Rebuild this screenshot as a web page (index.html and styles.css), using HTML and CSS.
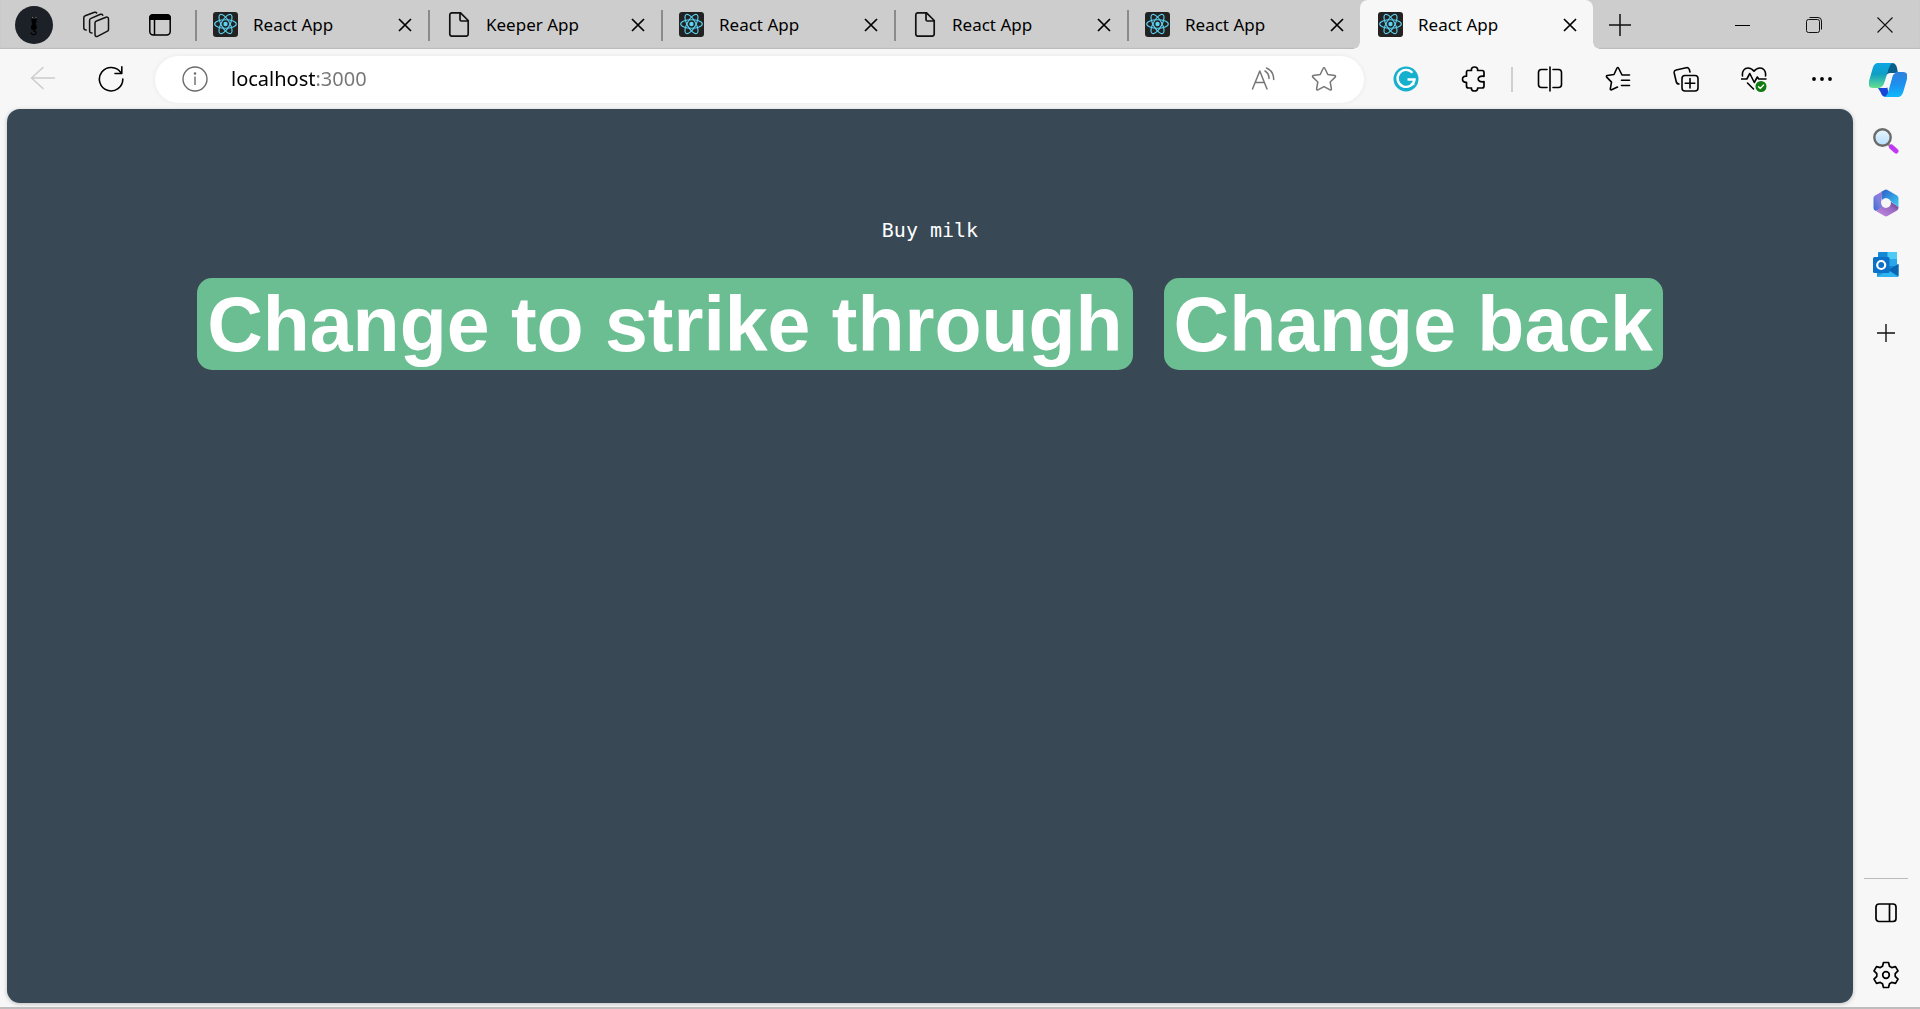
FILE: index.html
```html
<!DOCTYPE html>
<html lang="en">
<head>
<meta charset="utf-8">
<meta name="viewport" content="width=device-width, initial-scale=1">
<title>React App</title>
<link rel="stylesheet" href="styles.css">
</head>
<body>
<svg class="defs" aria-hidden="true">
  <symbol id="react" viewBox="0 0 25 25">
    <rect width="25" height="25" rx="3" fill="#222"/>
    <g fill="none" stroke="#5bd3f3" stroke-width="1.1">
      <ellipse cx="12.5" cy="12" rx="10.8" ry="4.2"/>
      <ellipse cx="12.5" cy="12" rx="10.8" ry="4.2" transform="rotate(60 12.5 12)"/>
      <ellipse cx="12.5" cy="12" rx="10.8" ry="4.2" transform="rotate(120 12.5 12)"/>
    </g>
    <circle cx="12.5" cy="12" r="2.2" fill="#5bd3f3"/>
  </symbol>
  <symbol id="file" viewBox="0 0 25 25">
    <path d="M6 .8h8.500l7.700 7.700V22a2.200 2.200 0 0 1-2.200 2.200H6A2.200 2.200 0 0 1 3.800 22V3A2.200 2.200 0 0 1 6 .8zM14 1v6.500a1.500 1.500 0 0 0 1.500 1.500H22" fill="none" stroke="#111" stroke-width="1.700"/>
  </symbol>
  <symbol id="close" viewBox="0 0 14 14">
    <path d="M1 1l12 12M13 1L1 13" fill="none" stroke="#000" stroke-width="1.700"/>
  </symbol>
</svg>

<header class="tabstrip">
  <button class="profile" aria-label="Profile">
    <svg width="38" height="38" viewBox="0 0 38 38"><circle cx="19" cy="19" r="19" fill="#1c2127"/><path d="M16.500 11l1 2h3l1-2v5l-1 2c2.500 3 1 6-1 6.500h-1c-3-1-3.500-4-1-6.500l-1-2z" fill="#000"/><path d="M18 25c3 0 4 1.500 2.500 3-2 1.400-4.500.4-4.500-1.500" fill="none" stroke="#000" stroke-width="1.200"/><path d="M17 11.500h1M20.500 11.500h1" stroke="#777" stroke-width="1"/></svg>
  </button>
  <button class="strip-button" aria-label="Workspaces">
    <svg width="28" height="28" viewBox="0 0 28 28" fill="none" stroke="#111" stroke-width="1.500" stroke-linejoin="round" stroke-linecap="round"><path d="M14.500 10l9.500-3.800c1.300-.5 2.500.3 2.500 1.700v10.500c0 1-.6 1.700-1.500 2l-9.500 5c-1.200.5-2.500-.3-2.500-1.600v-11.800c0-.9.600-1.700 1.500-2z"/><path d="M10 22c-1.500 0-2.400-.7-2.400-2V9.400c0-1 .5-1.700 1.400-2l9.500-4.100c1-.3 1.900 0 2.300.9"/><path d="M4.200 19c-1.500-.1-2.400-.7-2.400-2V6.800c0-1 .5-1.700 1.400-2L12.500 1.300c.9-.3 1.700 0 2.200.7"/></svg>
  </button>
  <button class="strip-button" aria-label="Tab actions menu">
    <svg width="24" height="24" viewBox="0 0 24 24"><rect x="1.800" y="2" width="20.400" height="20" rx="3.500" fill="none" stroke="#000" stroke-width="1.500"/><path d="M1 7V5a4 4 0 0 1 4-4h14a4 4 0 0 1 4 4v2z"/><path d="M6.500 7v15" stroke="#000" stroke-width="1.500"/></svg>
  </button>
  <nav class="tabs" aria-label="Tabs">
    <div class="tab"><svg class="favicon"><use href="#react"/></svg><a class="tab-title" href="#">React App</a><button class="tab-close" aria-label="Close tab"><svg><use href="#close"/></svg></button></div>
    <div class="tab"><svg class="favicon"><use href="#file"/></svg><a class="tab-title" href="#">Keeper App</a><button class="tab-close" aria-label="Close tab"><svg><use href="#close"/></svg></button></div>
    <div class="tab"><svg class="favicon"><use href="#react"/></svg><a class="tab-title" href="#">React App</a><button class="tab-close" aria-label="Close tab"><svg><use href="#close"/></svg></button></div>
    <div class="tab"><svg class="favicon"><use href="#file"/></svg><a class="tab-title" href="#">React App</a><button class="tab-close" aria-label="Close tab"><svg><use href="#close"/></svg></button></div>
    <div class="tab"><svg class="favicon"><use href="#react"/></svg><a class="tab-title" href="#">React App</a><button class="tab-close" aria-label="Close tab"><svg><use href="#close"/></svg></button></div>
    <div class="tab tab-active"><svg class="favicon"><use href="#react"/></svg><a class="tab-title" href="#" aria-current="page">React App</a><button class="tab-close" aria-label="Close tab"><svg><use href="#close"/></svg></button></div>
  </nav>
  <button class="new-tab" aria-label="New tab">
    <svg width="22" height="22" viewBox="0 0 22 22" stroke="#111" stroke-width="1.500"><path d="M11 0v22M0 11h22"/></svg>
  </button>
  <div class="window-controls">
    <button aria-label="Minimize"><svg width="16" height="16" viewBox="0 0 16 16"><path d="M0 8.500h15" stroke="#000"/></svg></button>
    <button aria-label="Restore"><svg width="16" height="16" viewBox="0 0 16 16" fill="none" stroke="#111"><rect x=".5" y="2.500" width="13" height="13" rx="2"/><path d="M3.500.5H12A3.500 3.500 0 0 1 15.500 4v8.500"/></svg></button>
    <button aria-label="Close window"><svg width="16" height="16" viewBox="0 0 16 16"><path d="M.5.500l15 15M15.500.500l-15 15" stroke="#111" stroke-width="1.100"/></svg></button>
  </div>
</header>

<div class="toolbar">
  <button class="tool" aria-label="Back" disabled>
    <svg width="26" height="26" viewBox="0 0 26 26" fill="none" stroke="#ccc" stroke-width="1.500" stroke-linecap="round" stroke-linejoin="round"><path d="M24.500 12H1.500M13 1.500L1.500 12 13 22.500"/></svg>
  </button>
  <button class="tool" aria-label="Refresh">
    <svg width="26" height="26" viewBox="0 0 26 26" fill="none" stroke="#000" stroke-width="1.600" stroke-linecap="round" stroke-linejoin="round"><path d="M24.800 13A11.700 11.700 0 1 1 22.900 6.800"/><path d="M23.800.800v6.700h-6.800"/></svg>
  </button>
  <form class="address">
    <button type="button" class="site-info" aria-label="View site information">
      <svg width="26" height="26" viewBox="0 0 26 26" fill="none" stroke="#6b6b6b" stroke-width="1.400"><circle cx="13" cy="13" r="12"/><path d="M13 10.500v8.500"/><circle cx="13" cy="7.500" r=".6" fill="#6b6b6b"/></svg>
    </button>
    <input class="url" type="text" aria-label="Address" value="localhost:3000">
    <button type="button" class="address-tool" aria-label="Read aloud">
      <svg width="24" height="24" viewBox="0 0 24 24" fill="none" stroke="#767676" stroke-width="1.500" stroke-linecap="round" stroke-linejoin="round"><path d="M1.500 22L8.800 4l7.200 18M4 15.500h9.500M14 4c2.500 1.500 4 4.200 4 7.500M15.500 1c4.200 1.700 7.200 6 7.200 11.500"/></svg>
    </button>
    <button type="button" class="address-tool" aria-label="Add this page to favorites">
      <svg width="26" height="26" viewBox="0 0 26 26" fill="none" stroke="#767676" stroke-width="1.500" stroke-linejoin="round"><path d="M12.200 2.200c.3-.7 1.300-.7 1.600 0l3 6.300 6.900 1c.8.100 1.100 1 .5 1.600l-5 4.900 1.200 6.900c.1.800-.6 1.400-1.300 1L13 20.600l-6.100 3.300c-.7.400-1.400-.2-1.300-1l1.200-6.900-5-4.900c-.6-.6-.3-1.500.500-1.600l6.900-1z"/></svg>
    </button>
  </form>
  <button class="tool" aria-label="Grammarly">
    <svg width="26" height="26" viewBox="0 0 26 26" fill="none"><circle cx="13" cy="13" r="12.500" fill="#15b0cd"/><path d="M19.500 6.800a8.500 8.500 0 1 0 2 6.700h-7M21.500 13l-1.500 6" stroke="#fff" stroke-width="2.400"/></svg>
  </button>
  <button class="tool" aria-label="Extensions">
    <svg width="26" height="26" viewBox="0 0 26 26" fill="none" stroke="#000" stroke-width="1.700" stroke-linejoin="round"><path d="M6.500 4.500h4C9.900 2 11.500 1 13.500 1s3.600 1 3.100 3.500H21a2 2 0 0 1 2 2v3.800c-4-.6-5.800.9-5.800 2.700s1.800 3.300 5.800 2.700V20a2 2 0 0 1-2 2h-4.400c.4 2-1.200 3-3.100 3s-3.500-1-3-3H7.500a2 2 0 0 1-2-2v-3.700C2.700 16.500 1.500 15 1.500 13.200S2.700 10 5.500 10.200V6a1.500 1.500 0 0 1 1-1.500z"/></svg>
  </button>
  <span class="toolbar-divider"></span>
  <button class="tool" aria-label="Split screen">
    <svg width="26" height="26" viewBox="0 0 26 26" fill="none" stroke="#000" stroke-width="1.600" stroke-linecap="round"><path d="M10 3.500H4.500a3 3 0 0 0-3 3v12a3 3 0 0 0 3 3H10M16 3.500h5.500a3 3 0 0 1 3 3v12a3 3 0 0 1-3 3H16M13 1v24"/></svg>
  </button>
  <button class="tool" aria-label="Favorites">
    <svg width="26" height="26" viewBox="0 0 26 26" fill="none" stroke="#000" stroke-width="1.600" stroke-linecap="round" stroke-linejoin="round"><path d="M24.500 9h-7.500L13.500 2c-.3-.7-1.200-.7-1.500 0L9 8.500l-6.800 1c-.8.100-1 1-.5 1.600l4.800 5-1.200 6.700c-.1.800.6 1.400 1.300 1L12.500 21M16.500 14.200h8M16.500 19.500h8"/></svg>
  </button>
  <button class="tool" aria-label="Collections">
    <svg width="26" height="26" viewBox="0 0 26 26" fill="none" stroke="#000" stroke-width="1.600" stroke-linecap="round" stroke-linejoin="round"><rect x="9" y="9.500" width="16" height="15.500" rx="3"/><path d="M17 12.500v9.500M12.200 17.200h9.600M17 6l-.6-2.300a2.800 2.800 0 0 0-3.300-2L3.200 4A2.600 2.600 0 0 0 1.200 7l2 8.500a3 3 0 0 0 2.800 2.500"/></svg>
  </button>
  <button class="tool" aria-label="Browser essentials">
    <svg width="26" height="26" viewBox="0 0 26 26" fill="none" stroke="#000" stroke-width="1.600" stroke-linecap="round" stroke-linejoin="round"><path d="M1.500 10C.8 5 3.500 2 7 2c2.500 0 4.500 1.200 6 3.200C14.500 3.200 16.500 2 19 2c3.500 0 6.200 3 5.500 8M.5 13h5.300l3-5.500 4.500 9 3-5.500 1.500 2h7.200M6.500 17l6 6"/><circle cx="20" cy="20.500" r="5.500" fill="#107c10" stroke="none"/><path d="M17.500 20.700l1.800 1.800 3.300-3.500" stroke="#fff" stroke-width="1.300"/></svg>
  </button>
  <button class="tool" aria-label="Settings and more">
    <svg width="22" height="6" viewBox="0 0 22 6"><circle cx="3" cy="3" r="1.900"/><circle cx="11" cy="3" r="1.900"/><circle cx="19" cy="3" r="1.900"/></svg>
  </button>
  <button class="copilot" aria-label="Copilot">
    <svg width="38" height="34" viewBox="0 0 38 34">
      <defs>
        <linearGradient id="ribbon-left" x1="0" y1="0" x2="0" y2="1"><stop offset="0" stop-color="#0fa5e6"/><stop offset=".45" stop-color="#0f9fc4"/><stop offset="1" stop-color="#63e08e"/></linearGradient>
        <linearGradient id="ribbon-right" x1="0" y1="0" x2="0" y2="1"><stop offset="0" stop-color="#2f80dc"/><stop offset=".5" stop-color="#1c90ef"/><stop offset="1" stop-color="#10b8fb"/></linearGradient>
      </defs>
      <path d="M17 0h6c3 0 4.500 2 5 5l1 5h-7q-3 0-5 2z" fill="#075f8a"/>
      <path d="M9 25h3q4 0 6-3l2 12h-2c-4 0-5.500-2-6.500-5z" fill="#1a46d6"/>
      <path d="M9 0h15c-3 1-4 4-5 8l-3.500 11c-1 3.500-3 6-6.500 6H4c-4 0-5-3-4-7L3.500 6C4.500 2.500 6 0 9 0z" fill="url(#ribbon-left)"/>
      <path d="M29 34H15c3-1 4-4 5-8l3-11c1-3.500 2-6 5.500-6H34c4 0 5 3 4 7l-3.500 12c-1 3.500-2.500 6-5.500 6z" fill="url(#ribbon-right)"/>
      <path d="M22.500 10h4c-2.500 1-3.300 3-4 6l-1.500 5c-1 3-2 4-4.500 4h-4.500c2.500-1 3.300-3 4-6l2-5c1-3 2-4 4.500-4z" fill="#f7f7f7"/>
    </svg>
  </button>
</div>

<div class="workspace">
  <main class="viewport">
    <h1 class="todo">
      <span class="todo-item">Buy milk</span>
      <span class="todo-actions">
        <button class="todo-button">Change to strike through</button>
        <button class="todo-button">Change back</button>
      </span>
    </h1>
  </main>
  <aside class="sidebar">
    <button aria-label="Search">
      <svg width="26" height="26" viewBox="0 0 26 26"><defs><linearGradient id="lens" x1="0" y1="0" x2="0" y2="1"><stop offset="0" stop-color="#e8f6ff"/><stop offset="1" stop-color="#b5defa"/></linearGradient></defs><path d="M15 16l3 3" stroke="#999" stroke-width="2.500"/><path d="M18.500 19l4.500 4" stroke="#c238f2" stroke-width="5" stroke-linecap="round"/><circle cx="9.500" cy="9.500" r="8.200" fill="url(#lens)" stroke="#6a6a6a" stroke-width="2.400"/></svg>
    </button>
    <button aria-label="Microsoft 365">
      <svg width="26" height="28" viewBox="0 0 26 28"><defs><linearGradient id="fold-top" x1="0" y1="0" x2="1" y2="1"><stop offset="0" stop-color="#2c5cc8"/><stop offset="1" stop-color="#3cd0f5"/></linearGradient><linearGradient id="fold-left" x1="1" y1="0" x2="0" y2="1"><stop offset="0" stop-color="#9f78dc"/><stop offset=".5" stop-color="#7f7fdc"/><stop offset="1" stop-color="#2f6cd0"/></linearGradient><linearGradient id="fold-bottom" x1="0" y1="1" x2="1" y2="0"><stop offset="0" stop-color="#c58ae0"/><stop offset=".6" stop-color="#9a6ac4"/><stop offset="1" stop-color="#54357c"/></linearGradient></defs><path d="M8 3L11.500 1q1.500-.8 3 0L24 6.500q1.500 1 1.500 2.500v9L17.500 12 13 9.200 9 12z" fill="url(#fold-top)"/><path d="M10 2L2 6.500Q.5 7.500.5 9v10q0 1.500 1.500 2.500l1 .6 7.500-4L8.200 14l1-11z" fill="url(#fold-left)"/><path d="M3 22l8.500 5q1.500.8 3 0L24 21.500q1.500-1 1.500-3V18l-8-5.500V16L13 18.800l-3-1z" fill="url(#fold-bottom)"/><circle cx="13" cy="14" r="4.800" fill="#f7f7f7"/></svg>
    </button>
    <button aria-label="Outlook">
      <svg width="26" height="26" viewBox="0 0 26 26"><rect x="5" y="0" width="19" height="20" rx="1" fill="#1389d6"/><path d="M14.500 0H23q1 0 1 1v13h-9.500z" fill="#4ecbf5"/><path d="M14.500 7H24v7h-9.500z" fill="#28a8ea"/><path d="M4 12l11 6 10.500-6v12q0 1-1 1H5q-1 0-1-1z" fill="#1c96dc"/><path d="M15 18l10.500-6v12z" fill="#0a64b0"/><path d="M4 25l11-7 10 7z" fill="#2fb4ef"/><rect x="0" y="5" width="16.500" height="16" rx="1.500" fill="#0a70c8"/><circle cx="8.200" cy="13" r="4" fill="none" stroke="#fff" stroke-width="2.200"/></svg>
    </button>
    <button class="sidebar-add" aria-label="Customize">
      <svg width="20" height="20" viewBox="0 0 20 20" stroke="#111" stroke-width="1.400"><path d="M10 1v18M1 10h18"/></svg>
    </button>
    <div class="sidebar-bottom">
      <button aria-label="Hide sidebar">
        <svg width="24" height="22" viewBox="0 0 24 22" fill="none" stroke="#000" stroke-width="1.700"><rect x="2" y="2" width="20" height="17.500" rx="3"/><path d="M15.500 2v17.500"/></svg>
      </button>
      <button aria-label="Settings">
        <svg width="26" height="28" viewBox="0 0 26 28" fill="none" stroke="#000" stroke-width="1.700" stroke-linejoin="round"><path d="M10.500 1.500h5l1 3.800 2.200 1.300 3.800-1 2.500 4.300-2.800 2.800v2.600l2.800 2.800-2.500 4.300-3.800-1-2.200 1.300-1 3.800h-5l-1-3.800-2.200-1.300-3.800 1L1 18.100l2.800-2.800v-2.600L1 9.900l2.500-4.300 3.800 1 2.200-1.300z"/><circle cx="13" cy="14" r="3.300"/></svg>
      </button>
    </div>
  </aside>
</div>
</body>
</html>
```
FILE: styles.css
```css
* {
  box-sizing: border-box;
}

body {
  margin: 0;
  min-height: 100vh;
  display: flex;
  flex-direction: column;
  background: #f7f7f7;
  border-bottom: 2px solid #bdbdbd;
  font-family: "Noto Sans", "Open Sans", sans-serif;
  color: #000;
}

button {
  display: flex;
  align-items: center;
  justify-content: center;
  margin: 0;
  padding: 0;
  border: 0;
  background: none;
  color: inherit;
  font: inherit;
}

.defs {
  display: none;
}

.tabstrip {
  display: flex;
  height: 49px;
  padding-left: 4px;
  background: #cdcdcd;
  box-shadow: inset 0 -1px 1px #bbb;
}

.profile {
  width: 60px;
}

.strip-button {
  width: 64px;
}

.tabs {
  display: flex;
  flex: 0 1 1398px;
  min-width: 0;
  margin-left: 3px;
}

.tab {
  position: relative;
  display: flex;
  flex: 1 1 0;
  min-width: 0;
  align-items: center;
  padding: 0 16px 0 18px;
}

.tab::before {
  content: "";
  position: absolute;
  left: 0;
  top: 10px;
  width: 2px;
  height: 31px;
  background: #8b8b8b;
}

.favicon {
  flex: none;
  width: 25px;
  height: 25px;
}

.tab-title {
  flex: 1;
  margin-left: 15px;
  overflow: hidden;
  white-space: nowrap;
  color: #000;
  font-size: 17px;
  line-height: 24px;
  text-decoration: none;
}

.tab-close {
  width: 14px;
  height: 14px;
}

.tab-close svg {
  width: 14px;
  height: 14px;
}

.tab-active {
  background: #f7f7f7;
  border-radius: 8px 8px 0 0;
}

.tab-active::before,
.tab-active::after {
  content: "";
  position: absolute;
  top: auto;
  bottom: 0;
  width: 6px;
  height: 6px;
}

.tab-active::before {
  left: -6px;
  background: radial-gradient(circle at 0 0, #cdcdcd 5px, #f7f7f7 6px);
}

.tab-active::after {
  right: -6px;
  background: radial-gradient(circle at 100% 0, #cdcdcd 5px, #f7f7f7 6px);
}

.new-tab {
  width: 54px;
}

.window-controls {
  display: flex;
  margin-left: auto;
}

.window-controls button {
  width: 71px;
}

.toolbar {
  display: flex;
  align-items: center;
  height: 60px;
  padding-left: 9px;
}

.tool {
  flex: none;
  width: 68px;
  height: 48px;
}

.address {
  display: flex;
  flex: 1;
  min-width: 0;
  height: 47px;
  margin: 0 8px 0 10px;
  padding: 0 10px 0 16px;
  align-items: center;
  background: #fff;
  border-radius: 24px;
  box-shadow: 0 0 4px #e6e6e6;
}

.site-info {
  width: 48px;
}

.url {
  flex: 1;
  min-width: 0;
  margin-left: 12px;
  padding: 0;
  border: 0;
  outline: 0;
  background: linear-gradient(90deg, #000 85px, #767676 85px);
  background-clip: text;
  -webkit-background-clip: text;
  color: transparent;
  font-family: inherit;
  font-size: 20px;
  line-height: 28px;
}

.address-tool {
  width: 61px;
}

.toolbar-divider {
  width: 2px;
  height: 25px;
  margin: 0 3px;
  background: #cfcfcf;
}

.copilot {
  flex: none;
  width: 64px;
  padding-top: 1px;
}

.workspace {
  display: flex;
  flex: 1;
}

.viewport {
  flex: 1;
  min-width: 0;
  margin: 0 0 4px 7px;
  background: #384955;
  border-radius: 13px;
  box-shadow: 0 1px 4px #bbb;
}

.todo {
  display: flex;
  flex-direction: column;
  align-items: center;
  gap: 34px;
  margin: 0;
  padding: 107px 16px 0;
  color: #fff;
}

.todo-item {
  font-family: "DejaVu Sans Mono", monospace;
  font-size: 20px;
  font-weight: 400;
  line-height: 28px;
}

.todo-actions {
  display: flex;
  flex-wrap: wrap;
  justify-content: center;
  gap: 31px;
}

.todo-button {
  padding: 2px 10px;
  background: #6bbe92;
  border-radius: 15px;
  font-family: "Liberation Sans", Arial, sans-serif;
  font-size: 77px;
  font-weight: 700;
  line-height: 88px;
}

.sidebar {
  display: flex;
  flex: none;
  flex-direction: column;
  width: 67px;
  padding: 1px 1px 0 0;
}

.sidebar button {
  width: 100%;
  height: 62px;
}

.sidebar .sidebar-add {
  height: 74px;
}

.sidebar-bottom {
  margin: auto 11px 1px;
  border-top: 1px solid #bbb;
  padding-top: 3px;
}
```
